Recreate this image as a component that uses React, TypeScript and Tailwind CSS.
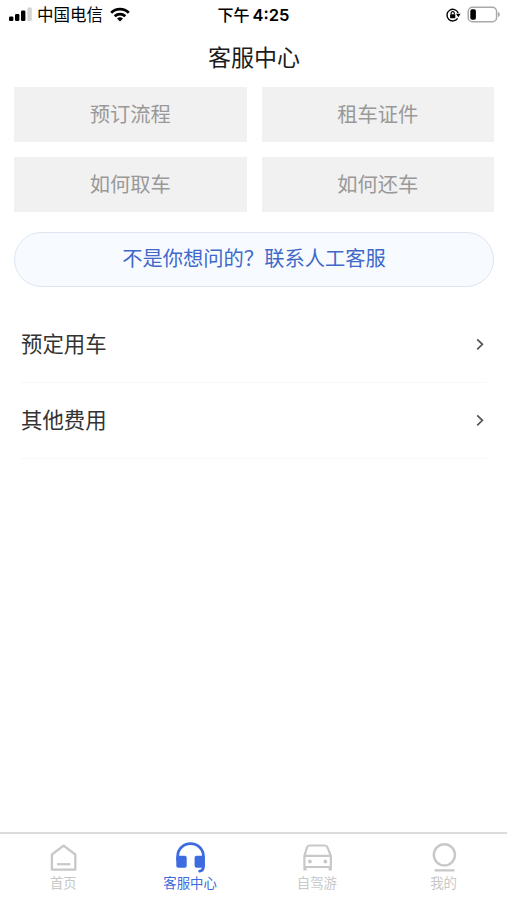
import React from 'react';
import clsx from 'clsx';

interface TabItem {
  label: string;
  icon: React.ReactNode;
  active?: boolean;
}

const QUICK_LINKS = ['预订流程', '租车证件', '如何取车', '如何还车'];
const TOPICS = ['预定用车', '其他费用'];

const HomeIcon = () => (
  <svg viewBox="0 0 32 32" className="h-8 w-8" fill="none" stroke="currentColor" strokeWidth="2.3" strokeLinejoin="round">
    <path d="M16.6 4.6 28.3 13.5V28.7H4.9V13.5Z" />
    <path d="M10 23.2h13.4" strokeWidth="2.2" />
  </svg>
);

const HeadsetIcon = () => (
  <svg viewBox="0 0 32 32" className="h-8 w-8" fill="none" stroke="currentColor" strokeLinecap="round">
    <path d="M3.7 19V15a12.8 12.4 0 0 1 25.7 0V25.5c0 3-1.2 4.3-3.8 4.6" strokeWidth="2.8" />
    <rect x="2.3" y="14.8" width="10.4" height="12" rx="2" fill="currentColor" stroke="none" />
    <rect x="20.6" y="14.8" width="10.2" height="12" rx="2" fill="currentColor" stroke="none" />
  </svg>
);

const CarIcon = () => (
  <svg viewBox="0 0 32 32" className="h-8 w-8" fill="none" stroke="currentColor" strokeWidth="2.2" strokeLinejoin="round">
    <path d="M3.4 26V15L6 6.4Q6.6 4.5 8.6 4.5H23.8Q25.8 4.5 26.5 6.4L29.9 15V26" />
    <path d="M3.4 14.8H29.9M3.4 26H29.9" />
    <path d="M4 26v3.6M29.2 26v3.6" strokeWidth="3.2" />
    <circle cx="8.9" cy="20.5" r="1.9" fill="currentColor" stroke="none" />
    <circle cx="24.3" cy="20.5" r="1.9" fill="currentColor" stroke="none" />
  </svg>
);

const ProfileIcon = () => (
  <svg viewBox="0 0 32 32" className="h-8 w-8" fill="none" stroke="currentColor" strokeLinecap="round">
    <circle cx="16.4" cy="13.8" r="10.6" strokeWidth="2.4" />
    <path d="M7.4 29.4h18.2" strokeWidth="2.2" />
  </svg>
);

const TABS: TabItem[] = [
  { label: '首页', icon: <HomeIcon /> },
  { label: '客服中心', icon: <HeadsetIcon />, active: true },
  { label: '自驾游', icon: <CarIcon /> },
  { label: '我的', icon: <ProfileIcon /> },
];

const StatusBar = () => (
  <div className="grid h-[30px] grid-cols-3 items-center text-black">
    <div className="flex items-center pl-[9px]">
      <svg viewBox="0 0 24 16" className="h-4 w-6">
        <rect x="0" y="9.5" width="4.4" height="4.5" rx="1.3" />
        <rect x="6" y="7" width="4.4" height="7" rx="1.3" />
        <rect x="12" y="3.5" width="4.4" height="10.5" rx="1.3" />
        <rect x="18.4" y="0.5" width="4.4" height="13.5" rx="1.3" fill="#d4d4d4" />
      </svg>
      <span className="ml-[4px] pt-px text-[16.5px] leading-none whitespace-nowrap">中国电信</span>
      <svg viewBox="0 0 20 16" className="ml-[7px] h-4 w-5" fill="none" stroke="#000" strokeWidth="2.7">
        <path d="M1.2 5.8a12.6 12.6 0 0 1 17.6 0" />
        <path d="M4.7 9.3a7.7 7.7 0 0 1 10.6 0" />
        <path d="M10 14.5 7 11.6a4.4 4.4 0 0 1 6 0Z" fill="#000" stroke="none" />
      </svg>
    </div>
    <div className="text-center text-[16px] leading-none font-medium whitespace-nowrap">
      下午<span className="ml-[3px] font-['Inter'] text-[16.5px] font-semibold">4:25</span>
    </div>
    <div className="flex items-center justify-end pr-[7px]">
      <svg viewBox="0 0 16 16" className="h-4 w-4" fill="none" stroke="#000">
        <path d="M12.6 11.4A5.8 5.8 0 1 1 13.2 6" strokeWidth="1.4" />
        <path d="M11 6.8h4.6l-2.3 3.4Z" fill="#000" stroke="none" />
        <rect x="5.1" y="7.2" width="5.2" height="4" rx=".6" fill="#000" stroke="none" />
        <path d="M6.1 7.5V6.2a1.6 1.6 0 0 1 3.2 0v1.3" strokeWidth="1.1" />
      </svg>
      <svg viewBox="0 0 33 18" className="ml-[6px] h-[18px] w-[33px]" fill="none">
        <rect x="1.2" y="1.2" width="28.4" height="14.6" rx="4.3" stroke="#a9a9a9" strokeWidth="1.5" />
        <rect x="3.3" y="3.3" width="5.6" height="10.4" rx="1.8" fill="#000" />
        <path d="M31 5.8q1.8.8 1.8 2.7T31 11.2Z" fill="#a9a9a9" />
      </svg>
    </div>
  </div>
);

const App: React.FC = () => {
  return (
    <div className="flex h-screen w-full flex-col bg-white font-['Liberation_Sans','Noto_Sans_CJK_SC',sans-serif]">
      <StatusBar />

      <h1 className="h-[57px] pl-px text-center text-[23px] leading-[56px] text-[#1c1c1c]">客服中心</h1>

      {/* Quick links */}
      <div className="grid grid-cols-2 gap-x-[15px] gap-y-[15px] pr-[13px] pl-[14px]">
        {QUICK_LINKS.map(label => (
          <button key={label} className="h-[55px] bg-[#f1f1f1] text-[20.3px] leading-[54px] text-[#999]">
            {label}
          </button>
        ))}
      </div>

      <button className="mt-5 mr-[13px] ml-[14px] h-[55px] shrink-0 rounded-full border border-[#dde6f0] bg-[#f7fbff] text-[20.3px] leading-[51px] text-[#4169c8]">
        不是你想问的？联系人工客服
      </button>

      {/* Help topics */}
      <ul className="mt-[19px] pr-[21px] pl-[21px]">
        {TOPICS.map(topic => (
          <li key={topic} className="flex h-[76.5px] items-center justify-between border-b border-[#f8f8f8]">
            <span className="pt-[3px] text-[21.4px] leading-none text-[#333]">{topic}</span>
            <svg viewBox="0 0 8 12" className="mr-[2px] h-3 w-2" fill="none" stroke="#555" strokeWidth="1.7">
              <path d="M1.2 1.3 6.4 6.3 1.2 11.3" />
            </svg>
          </li>
        ))}
      </ul>

      {/* Bottom navigation */}
      <nav className="mt-auto grid h-[68px] grid-cols-4 border-t-2 border-[#dcdcdc]">
        {TABS.map(tab => (
          <div
            key={tab.label}
            className={clsx('flex flex-col items-center pt-[7px]', tab.active ? 'text-[#3d6be0]' : 'text-[#c8c8c8]')}
          >
            {tab.icon}
            <span className="mt-[4px] text-[13.4px] leading-none">{tab.label}</span>
          </div>
        ))}
      </nav>
    </div>
  );
};

export default App;
